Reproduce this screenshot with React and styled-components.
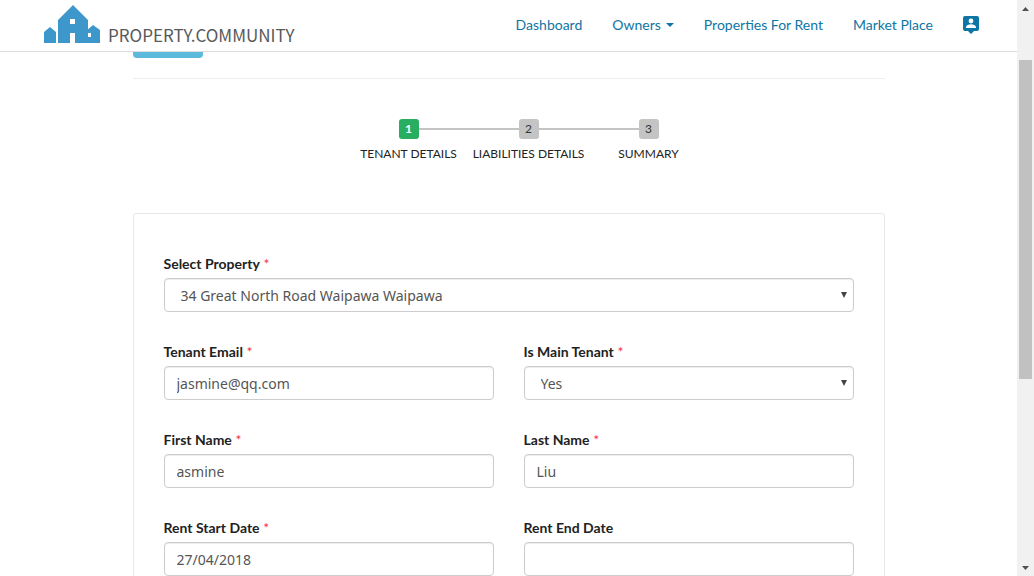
import React from "react";
import styled, { createGlobalStyle, css } from "styled-components";

const GlobalStyle = createGlobalStyle`
  *, *::before, *::after { box-sizing: border-box; }
  html, body { margin: 0; padding: 0; background: #fff; }
  body {
    font-family: Lato, "Liberation Sans", sans-serif;
    font-size: 14px;
    line-height: 20px;
    color: #222;
  }
`;

const Shell = styled.div`
  display: flex;
  height: 100vh;
  overflow: hidden;
`;

const Page = styled.div`
  flex: 1;
  min-width: 0;
  display: flex;
  flex-direction: column;
`;

const Header = styled.header`
  flex: none;
  display: flex;
  align-items: center;
  justify-content: space-between;
  height: 52px;
  padding: 0 38px 2px 44px;
  border-bottom: 1px solid #ddd;
`;

const Brand = styled.a`
  display: flex;
  align-items: flex-end;
  gap: 8px;
  color: #58595b;
  text-decoration: none;
`;

const BrandName = styled.span`
  font-family: "Noto Sans CJK JP", "Liberation Sans", sans-serif;
  font-size: 17px;
  line-height: 18px;
`;

const Nav = styled.nav`
  display: flex;
  align-items: center;
  gap: 30px;
`;

const NavLink = styled.a`
  display: flex;
  align-items: center;
  gap: 5px;
  font-size: 14px;
  color: #0f75a4;
  text-decoration: none;
`;

const Caret = styled.span`
  border: 4px solid transparent;
  border-top-color: currentColor;
  border-bottom: 0;
`;

const Viewport = styled.main`
  flex: 1;
  min-height: 0;
  overflow: hidden;
`;

const Content = styled.div`
  max-width: 752px;
  margin: 0 auto;
`;

const TopBar = styled.div`
  height: 27px;
  border-bottom: 1px solid #eee;
`;

const ActionButton = styled.button`
  display: block;
  width: 70px;
  height: 6px;
  padding: 0;
  border: 0;
  border-radius: 0 0 4px 4px;
  background: #5bb9dc;
`;

const Steps = styled.ol`
  display: flex;
  justify-content: center;
  margin: 0;
  padding: 40px 0 49px 40px;
  list-style: none;
`;

const Step = styled.li`
  flex: none;
  width: 120px;
  display: grid;
  grid-template-columns: 1fr 20px 1fr;
  align-items: center;
  row-gap: 5px;
  text-align: center;
`;

const StepLine = styled.span`
  height: 2px;
  background: ${(p) => (p.$visible ? "#c4c4c4" : "transparent")};
`;

const StepNumber = styled.span`
  height: 20px;
  border-radius: 3px;
  font-size: 12px;
  background: #c4c4c4;
  color: #333;
  ${(p) =>
    p.$active &&
    css`
      background: #27ae60;
      color: #fff;
      font-weight: 700;
    `}
`;

const StepName = styled.span`
  grid-column: 1 / -1;
  font-size: 12px;
  white-space: nowrap;
`;

const Card = styled.form`
  display: grid;
  grid-template-columns: 1fr 1fr;
  gap: 30px;
  padding: 40px 30px;
  border: 1px solid #e7e7e7;
  border-radius: 3px;
`;

const FieldBox = styled.div`
  display: flex;
  flex-direction: column;
  gap: 4px;
  min-width: 0;
  grid-column: ${(p) => (p.$wide ? "1 / -1" : "auto")};
`;

const Label = styled.label`
  font-weight: 700;
`;

const Required = styled.span`
  font-weight: 400;
  color: #f0343c;
`;

const control = css`
  width: 100%;
  height: 34px;
  border: 1px solid #ccc;
  border-radius: 4px;
  background: #fff;
  box-shadow: inset 0 1px 1px rgba(0, 0, 0, 0.075);
  font-family: "Noto Sans", "Open Sans", sans-serif;
  font-size: 14px;
  color: #555;
  outline: none;
`;

const TextInput = styled.input`
  ${control}
  padding: 0 12px;
`;

const SelectWrap = styled.div`
  position: relative;
`;

const Select = styled.select`
  ${control}
  display: block;
  appearance: none;
  padding: 0 24px 0 16px;
`;

const SelectArrow = styled.svg`
  position: absolute;
  right: 7px;
  top: 14px;
  pointer-events: none;
`;

const Scrollbar = styled.div`
  flex: none;
  width: 17px;
  display: flex;
  flex-direction: column;
  align-items: center;
  justify-content: space-between;
  padding: 7px 0 6px;
  background: #f1f1f1;
`;

const Track = styled.div`
  flex: 1;
  padding-top: 49px;
`;

const Thumb = styled.div`
  width: 13px;
  height: 63%;
  background: #c1c1c1;
`;

function BrandIcon() {
  return (
    <svg width="56" height="39" viewBox="0 0 56 39" fill="#3d97cb" fillRule="evenodd" aria-hidden="true">
      <path d="M0 27 6 22 12 27V38H0Z" />
      <path d="M14 15 29 0 44 15V38H31V28H26V38H14ZM26 14V19H31V14Z" />
      <path d="M42 26 49 20 56 25V38H42ZM43 28V32H47V28Z" />
    </svg>
  );
}

function ProfileIcon() {
  return (
    <svg width="16" height="18" viewBox="0 0 16 18" aria-hidden="true">
      <path fill="#0f75a4" d="M2 0H14Q16 0 16 2V13Q16 15 14 15H11L8 18 5 15H2Q0 15 0 13V2Q0 0 2 0Z" />
      <circle cx="8" cy="5" r="2.4" fill="#fff" />
      <path fill="#fff" d="M3 12V11Q4 8.3 8 8.3T13 11V12Z" />
    </svg>
  );
}

function Triangle({ up }) {
  return (
    <svg width="7" height="4" viewBox="0 0 7 4" aria-hidden="true">
      <path fill="#505050" d={up ? "M0 4 3.5 0 7 4Z" : "M0 0 3.5 4 7 0Z"} />
    </svg>
  );
}

function Field({ id, label, required, options, value, wide }) {
  return (
    <FieldBox $wide={wide}>
      <Label htmlFor={id}>
        {label}
        {required && <Required> *</Required>}
      </Label>
      {options ? (
        <SelectWrap>
          <Select id={id} defaultValue={options[0]}>
            {options.map((o) => (
              <option key={o}>{o}</option>
            ))}
          </Select>
          <SelectArrow width="6" height="6" viewBox="0 0 6 6" aria-hidden="true">
            <path fill="#444" d="M0 0H6L3 6Z" />
          </SelectArrow>
        </SelectWrap>
      ) : (
        <TextInput id={id} type="text" defaultValue={value} />
      )}
    </FieldBox>
  );
}

const steps = ["TENANT DETAILS", "LIABILITIES DETAILS", "SUMMARY"];

export default function App() {
  return (
    <>
      <GlobalStyle />
      <Shell>
        <Page>
          <Header>
            <Brand href="#">
              <BrandIcon />
              <BrandName>PROPERTY.COMMUNITY</BrandName>
            </Brand>
            <Nav>
              <NavLink href="#">Dashboard</NavLink>
              <NavLink href="#">
                Owners
                <Caret />
              </NavLink>
              <NavLink href="#">Properties For Rent</NavLink>
              <NavLink href="#">Market Place</NavLink>
              <NavLink href="#" aria-label="Account">
                <ProfileIcon />
              </NavLink>
            </Nav>
          </Header>
          <Viewport>
            <Content>
              <TopBar>
                <ActionButton type="button" aria-label="Back" />
              </TopBar>
              <Steps>
                {steps.map((name, i) => (
                  <Step key={name}>
                    <StepLine $visible={i > 0} />
                    <StepNumber $active={i === 0}>{i + 1}</StepNumber>
                    <StepLine $visible={i < steps.length - 1} />
                    <StepName>{name}</StepName>
                  </Step>
                ))}
              </Steps>
              <Card>
                <Field id="property" label="Select Property" required wide options={["34 Great North Road Waipawa Waipawa"]} />
                <Field id="email" label="Tenant Email" required value="jasmine@qq.com" />
                <Field id="main" label="Is Main Tenant" required options={["Yes", "No"]} />
                <Field id="first" label="First Name" required value="asmine" />
                <Field id="last" label="Last Name" required value="Liu" />
                <Field id="start" label="Rent Start Date" required value="27/04/2018" />
                <Field id="end" label="Rent End Date" value="" />
              </Card>
            </Content>
          </Viewport>
        </Page>
        <Scrollbar>
          <Triangle up />
          <Track>
            <Thumb />
          </Track>
          <Triangle />
        </Scrollbar>
      </Shell>
    </>
  );
}
